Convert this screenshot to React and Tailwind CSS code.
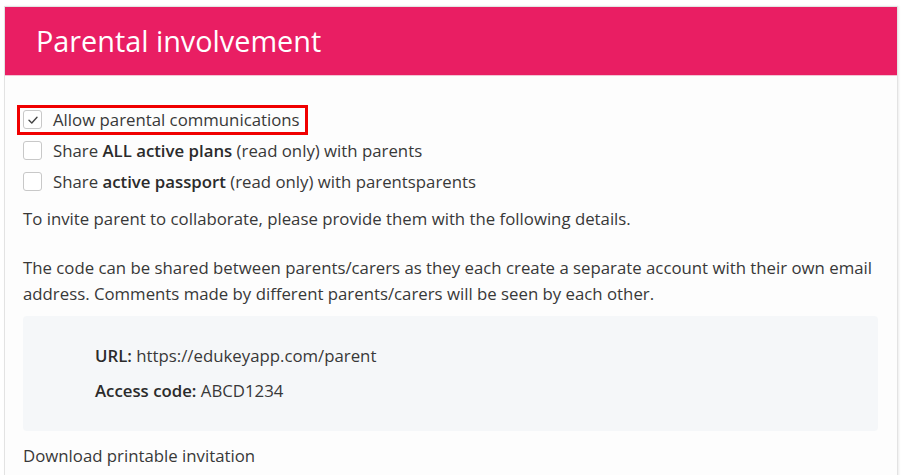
export default function App() {
  const font = { fontFamily: '"Open Sans", "Liberation Sans", sans-serif' };

  return (
    <div className="w-[903px] h-[475px] bg-white overflow-hidden pt-[6px] pl-[4px]" style={font}>
      <div className="w-[894px] h-[500px] bg-[#fdfdfd] border border-[#e3e3e3] shadow-[1px_0_2px_rgba(0,0,0,0.08)]">
        {/* header */}
        <div className="h-[69px] bg-[#e91e63] flex items-center pl-[31px] border-b border-[#f3c3d3]">
          <h1 className="text-[28.8px] text-white leading-none">Parental involvement</h1>
        </div>

        {/* body */}
        <div className="pl-[18px] pr-[18px] pt-[28px] text-[16.8px] text-[#383838]">
          <div className="h-[31px] flex items-center">
            <div className="inline-flex items-center h-[30px] -ml-[6px] pl-[3px] pr-[5px] border-[3px] border-[#f00000]">
              <span className="w-[19px] h-[19px] rounded-[3px] border border-[#c8c8c8] bg-white flex items-center justify-center">
                <svg width="12" height="12" viewBox="0 0 12 12" fill="none">
                  <path d="M2 6.3 L4.8 9 L10 3.2" stroke="#444" strokeWidth="1.4" strokeLinecap="round" strokeLinejoin="round" />
                </svg>
              </span>
              <span className="ml-[11px]">Allow parental communications</span>
            </div>
          </div>
          <div className="h-[31px] flex items-center">
            <span className="w-[19px] h-[19px] rounded-[3px] border border-[#c8c8c8] bg-white" />
            <span className="ml-[11px]">
              Share <b className="font-semibold text-[#2b2b2b]">ALL active plans</b> (read only) with parents
            </span>
          </div>
          <div className="h-[31px] flex items-center">
            <span className="w-[19px] h-[19px] rounded-[3px] border border-[#c8c8c8] bg-white" />
            <span className="ml-[11px]">
              Share <b className="font-semibold text-[#2b2b2b]">active passport</b> (read only) with parentsparents
            </span>
          </div>

          <p className="mt-[9px] leading-[26px]">
            To invite parent to collaborate, please provide them with the following details.
          </p>
          <p className="mt-[23px] leading-[26px]">
            The code can be shared between parents/carers as they each create a separate account with their own email address. Comments made by different parents/carers will be seen by each other.
          </p>

          <div className="mt-[9px] w-[855px] h-[115px] bg-[#f5f7f9] rounded-[4px] pl-[72px] pt-[27px]">
            <p className="leading-[26px]">
              <b className="font-semibold text-[#2b2b2b]">URL:</b> https://edukeyapp.com/parent
            </p>
            <p className="leading-[26px] mt-[9px]">
              <b className="font-semibold text-[#2b2b2b]">Access code:</b> ABCD1234
            </p>
          </div>

          <p className="mt-[12px] leading-[26px]">Download printable invitation</p>
        </div>
      </div>
    </div>
  );
}
